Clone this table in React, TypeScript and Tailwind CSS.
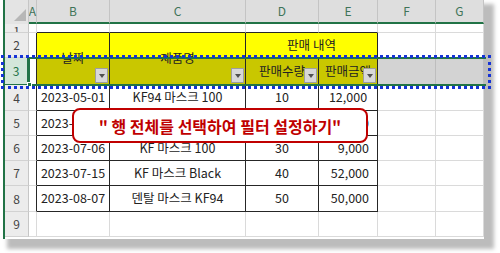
import React from "react";

const LIGHT = "border-r-[#dadada] border-b-[#dadada]";

type CellProps = { className?: string; children?: React.ReactNode };

function Cell({ className = "", children }: CellProps) {
  return (
    <div className={`relative flex items-center overflow-hidden border-r border-b ${className}`}>
      {children}
    </div>
  );
}

function RowHead({ n, active = false }: { n: number; active?: boolean }) {
  if (active) {
    return (
      <div className="flex items-center justify-center border-r-2 border-b border-r-[#217346] border-b-[#217346] bg-[#d3e6da] text-[12px] text-[#217346]">
        {n}
      </div>
    );
  }
  return (
    <div className="flex items-center justify-center border-r border-b border-r-[#c6c6c6] border-b-[#d2d2d2] bg-[#ececec] text-[12px] text-[#444]">
      {n}
    </div>
  );
}

function FilterButton() {
  return (
    <span className="absolute right-[1px] bottom-[1px] flex h-[15px] w-[13px] items-center justify-center border border-[#9e9e9e] bg-[#d8d8d8]">
      <span className="border-x-[3px] border-t-[4px] border-x-transparent border-t-[#505050]" />
    </span>
  );
}

const rows = [
  { date: "2023-05-01", item: "KF94 마스크 100", qty: "10", amount: "12,000", center: true },
  { date: "2023-06-10", item: "KF80 마스크 100", qty: "20", amount: "8,000", center: false },
  { date: "2023-07-06", item: "KF 마스크 100", qty: "30", amount: "9,000", center: false },
  { date: "2023-07-15", item: "KF 마스크 Black", qty: "40", amount: "52,000", center: false },
  { date: "2023-08-07", item: "덴탈 마스크 KF94", qty: "50", amount: "50,000", center: false },
];

const letters = ["A", "B", "C", "D", "E", "F", "G"];

export default function App() {
  return (
    <div className="relative h-[253px] w-[500px] overflow-hidden bg-white font-['Noto_Sans_CJK_KR','Noto_Sans',sans-serif] text-[12.5px] text-[#222]">
      <div className="ml-[3px] h-[239px] w-[481px] overflow-hidden border-l-2 border-[#217346] bg-white shadow-[7px_7px_4px_3px_#bcbcbc]">
        <div className="grid grid-cols-[24px_8px_73px_136px_73px_59px_58px_48px] grid-rows-[24px_9px_25px_27px_26px_25px_25px_25px_26px_25px]">
          {/* column headers */}
          <div className="relative border-r border-r-[#c6c6c6] bg-[#e4e4e4]">
            <svg className="absolute right-[2px] bottom-[3px]" width="12" height="12" viewBox="0 0 12 12">
              <polygon points="12,0 12,12 0,12" fill="#b7b7b7" />
            </svg>
          </div>
          {letters.map((l) => (
            <div
              key={l}
              className="flex items-center justify-center border-r border-b-2 border-r-[#c4c4c4] border-b-[#217346] bg-[#dedede] text-[12px] text-[#3f7459]"
            >
              {l}
            </div>
          ))}

          {/* row 1, mostly hidden */}
          <div className="flex justify-center overflow-hidden border-r border-b border-r-[#c6c6c6] border-b-[#d2d2d2] bg-[#ececec] text-[12px] leading-[12px] text-[#444]">
            <span className="mt-[1px]">1</span>
          </div>
          <Cell className={LIGHT} />
          <Cell className="border-r-[#dadada] border-b-[#262626]" />
          <Cell className="border-r-[#dadada] border-b-[#262626]" />
          <Cell className="border-r-[#dadada] border-b-[#262626]" />
          <Cell className="border-r-[#dadada] border-b-[#262626]" />
          <Cell className={LIGHT} />
          <Cell className={LIGHT} />

          {/* row 2 */}
          <RowHead n={2} />
          <Cell className="border-r-[#262626] border-b-[#dadada]" />
          <Cell className="row-span-2 justify-center border-r-[#262626] border-b-[#262626] bg-[linear-gradient(to_bottom,#ffff00_25px,#c9c700_25px)]">
            날짜
            <FilterButton />
          </Cell>
          <Cell className="row-span-2 justify-center border-r-[#262626] border-b-[#262626] bg-[linear-gradient(to_bottom,#ffff00_25px,#c9c700_25px)]">
            제품명
            <FilterButton />
          </Cell>
          <Cell className="col-span-2 justify-center border-r-[#262626] border-b-[#262626] bg-[#ffff00]">
            판매 내역
          </Cell>
          <Cell className={LIGHT} />
          <Cell className={LIGHT} />

          {/* row 3 (selected) */}
          <RowHead n={3} active />
          <Cell className="border-r-[#262626] border-b-[#dadada] bg-white" />
          <Cell className="justify-center border-r-[#262626] border-b-[#262626] bg-[#c9c700]">
            판매수량
            <FilterButton />
          </Cell>
          <Cell className="justify-center border-r-[#262626] border-b-[#262626] bg-[#c9c700]">
            판매금액
            <FilterButton />
          </Cell>
          <Cell className="border-r-[#bdbdbd] border-b-[#bdbdbd] bg-[#d3d3d3]" />
          <Cell className="border-r-[#bdbdbd] border-b-[#bdbdbd] bg-[#d3d3d3]" />

          {rows.map((r, i) => (
            <React.Fragment key={r.date}>
              <RowHead n={i + 4} />
              <Cell className="border-r-[#262626] border-b-[#dadada]" />
              <Cell className="justify-center border-r-[#262626] border-b-[#262626]">{r.date}</Cell>
              <Cell className="justify-center border-r-[#262626] border-b-[#262626]">{r.item}</Cell>
              <Cell className="justify-center border-r-[#262626] border-b-[#262626]">{r.qty}</Cell>
              <Cell
                className={`border-r-[#262626] border-b-[#262626] ${r.center ? "justify-center" : "justify-end pr-[8px]"}`}
              >
                {r.amount}
              </Cell>
              <Cell className={LIGHT} />
              <Cell className={LIGHT} />
            </React.Fragment>
          ))}

          {/* row 9 */}
          <RowHead n={9} />
          <Cell className={LIGHT} />
          <Cell className={LIGHT} />
          <Cell className={LIGHT} />
          <Cell className={LIGHT} />
          <Cell className={LIGHT} />
          <Cell className={LIGHT} />
          <Cell className={LIGHT} />
        </div>
      </div>

      {/* selection border on row 3 */}
      <div className="absolute top-[57px] left-[28px] h-[29px] w-[458px] border-y-2 border-l-2 border-[#217346]" />
      <div className="absolute top-[82px] left-[27px] h-[5px] w-[5px] border border-white bg-[#217346]" />

      {/* blue dotted annotation */}
      <div className="absolute top-[55px] left-[1px] h-[34px] w-[490px] border-[3px] border-dotted border-[#1533d6]" />

      {/* callout */}
      <div className="absolute top-[108px] left-[72px] flex h-[35px] w-[296px] items-center justify-center rounded-[8px] border-2 border-[#c00000] bg-white text-[16px] font-bold text-[#c00000]">
        " 행 전체를 선택하여 필터 설정하기"
      </div>
    </div>
  );
}
